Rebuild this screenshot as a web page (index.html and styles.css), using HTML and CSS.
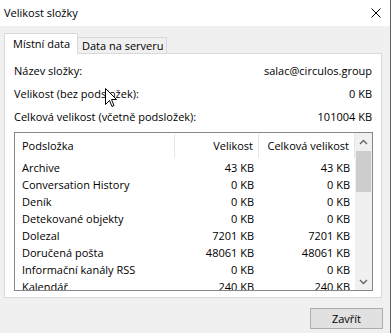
FILE: index.html
```html
<!DOCTYPE html>
<html lang="cs">
<head>
<meta charset="utf-8">
<title>Velikost složky</title>
<link rel="stylesheet" href="styles.css">
</head>
<body>
<div class="window">
  <div class="titlebar">
    <span class="title">Velikost složky</span>
    <svg class="close" width="10" height="10" viewBox="0 0 10 10"><path d="M0.5 0.5L9.5 9.5M9.5 0.5L0.5 9.5" stroke="#000" stroke-width="1" fill="none"/></svg>
  </div>
  <div class="main">
    <div class="tabs">
      <div class="tab active">Místní data</div>
      <div class="tab inactive">Data na serveru</div>
    </div>
    <div class="panel">
      <div class="info">
        <div class="inforow"><span>Název složky:</span><span>salac@circulos.group</span></div>
        <div class="inforow"><span>Velikost (bez podsložek):</span><span>0 KB</span></div>
        <div class="inforow"><span>Celková velikost (včetně podsložek):</span><span>101004 KB</span></div>
      </div>
      <div class="list">
        <div class="listmain">
          <div class="lhead">
            <div class="cell c1">Podsložka</div>
            <div class="cell c2">Velikost</div>
            <div class="cell c3">Celková velikost</div>
          </div>
          <div class="lrow"><div class="c1">Archive</div><div class="c2">43 KB</div><div class="c3">43 KB</div></div>
          <div class="lrow"><div class="c1">Conversation History</div><div class="c2">0 KB</div><div class="c3">0 KB</div></div>
          <div class="lrow"><div class="c1">Deník</div><div class="c2">0 KB</div><div class="c3">0 KB</div></div>
          <div class="lrow"><div class="c1">Detekované objekty</div><div class="c2">0 KB</div><div class="c3">0 KB</div></div>
          <div class="lrow"><div class="c1">Dolezal</div><div class="c2">7201 KB</div><div class="c3">7201 KB</div></div>
          <div class="lrow"><div class="c1">Doručená pošta</div><div class="c2">48061 KB</div><div class="c3">48061 KB</div></div>
          <div class="lrow"><div class="c1">Informační kanály RSS</div><div class="c2">0 KB</div><div class="c3">0 KB</div></div>
          <div class="lrow"><div class="c1">Kalendář</div><div class="c2">240 KB</div><div class="c3">240 KB</div></div>
        </div>
        <div class="scrollbar">
          <div class="sbtn"><svg width="9" height="6" viewBox="0 0 9 6"><path d="M1 5L4.5 1.5L8 5" stroke="#606060" stroke-width="1.3" fill="none"/></svg></div>
          <div class="track"><div class="thumb"></div></div>
          <div class="sbtn"><svg width="9" height="6" viewBox="0 0 9 6"><path d="M1 1L4.5 4.5L8 1" stroke="#606060" stroke-width="1.3" fill="none"/></svg></div>
        </div>
      </div>
    </div>
    <div class="footer">
      <button class="btn">Zavřít</button>
    </div>
  </div>
  <svg class="cursor" width="13" height="20" viewBox="0 0 13 20"><path d="M0.5 0.5L0.5 16.5L4.5 12.5L7 18.5L9 17.5L6.5 11.5L11.5 11.5Z" fill="#fff" stroke="#000" stroke-width="1" stroke-linejoin="miter"/></svg>
</div>
</body>
</html>
```

FILE: styles.css
```css
* { box-sizing: border-box; }
html, body { margin: 0; padding: 0; }
body {
  width: 391px;
  height: 333px;
  overflow: hidden;
  background: #f0f0f0;
  font-family: "Open Sans", "Noto Sans", sans-serif;
  font-size: 11px;
  color: #000;
}
.window {
  position: relative;
  width: 391px;
  height: 333px;
  border-right: 1px solid #5f5f5f;
}
.titlebar {
  height: 26px;
  background: #fff;
  display: flex;
  align-items: center;
  justify-content: space-between;
  padding: 0 9px 0 4px;
}
.title { line-height: 16px; }
.close { display: block; }
.main { padding: 7px 8px 0 4px; }
.tabs {
  display: flex;
  align-items: flex-end;
  height: 20px;
}
.tab {
  border: 1px solid #d9d9d9;
  border-bottom: none;
  white-space: nowrap;
}
.tab.active {
  width: 74px;
  height: 21px;
  margin-bottom: -1px;
  background: #fff;
  padding-left: 8px;
  line-height: 19px;
  position: relative;
  z-index: 1;
}
.tab.inactive {
  width: 89px;
  height: 16px;
  border-left: none;
  padding-left: 4px;
  line-height: 15px;
}
.panel {
  height: 245px;
  background: #fff;
  border: 1px solid #d9d9d9;
  padding: 5px 8px 0 9px;
}
.inforow {
  display: flex;
  justify-content: space-between;
  height: 23px;
  line-height: 23px;
  padding-right: 1px;
}
.list {
  margin-top: 4px;
  height: 159px;
  border: 1px solid #828790;
  display: flex;
  overflow: hidden;
}
.listmain {
  width: 340px;
  overflow: hidden;
}
.lhead {
  display: flex;
  height: 26px;
  align-items: center;
}
.lhead .cell {
  height: 24px;
  line-height: 24px;
  border-right: 1px solid #e5e5e5;
}
.lrow {
  display: flex;
  height: 17px;
  line-height: 17px;
}
.c1 { width: 160px; padding-left: 7px; white-space: nowrap; }
.c2 { width: 84px; text-align: right; padding-right: 5px; }
.c3 { width: 96px; text-align: right; padding-right: 5px; }
.scrollbar {
  width: 17px;
  background: #f0f0f0;
  display: flex;
  flex-direction: column;
}
.sbtn {
  height: 17px;
  display: flex;
  align-items: center;
  justify-content: center;
}
.track { flex: 1; }
.thumb {
  margin: 1px 1px 0 1px;
  height: 41px;
  background: #cdcdcd;
}
.footer {
  display: flex;
  justify-content: flex-end;
  padding-top: 10px;
}
.btn {
  width: 73px;
  height: 21px;
  margin-right: -1px;
  padding: 0;
  border: 1px solid #adadad;
  background: #e1e1e1;
  font-family: inherit;
  font-size: 11px;
  line-height: 19px;
  color: #000;
}
.cursor {
  position: absolute;
  left: 105px;
  top: 88px;
}
```
